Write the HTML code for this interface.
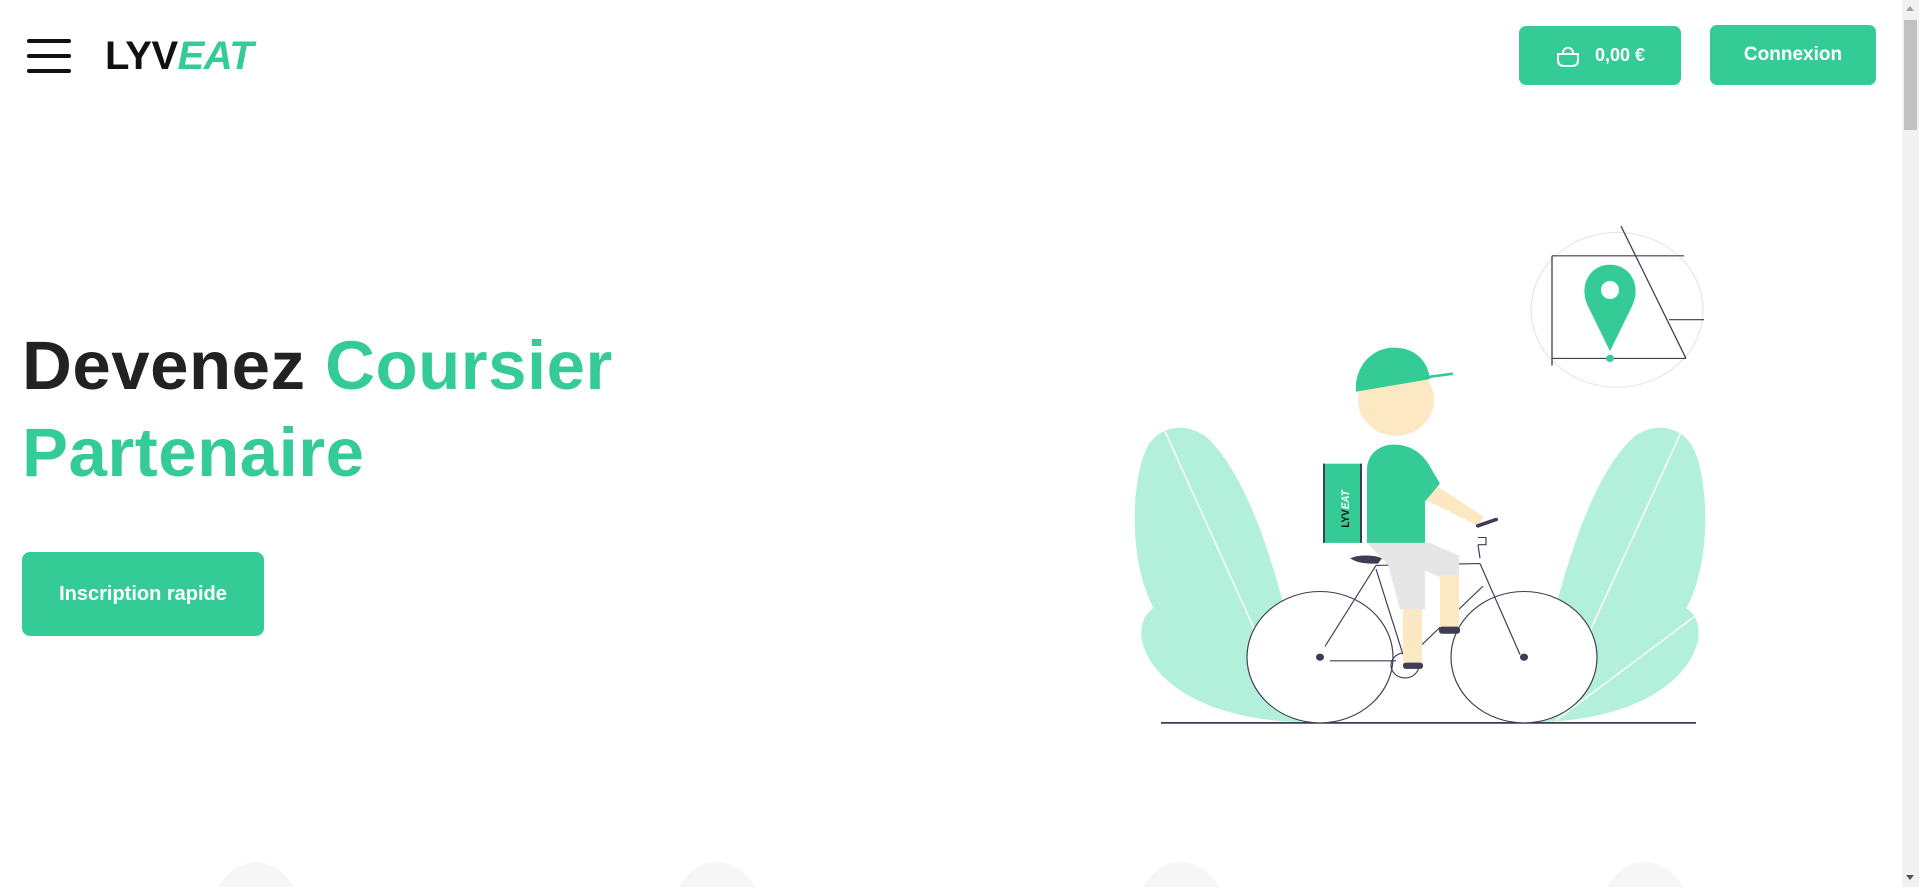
<!DOCTYPE html>
<html><head><meta charset="utf-8"><style>
html,body{margin:0;padding:0;width:1919px;height:887px;overflow:hidden;background:#fff;font-family:"Liberation Sans",sans-serif;}
#wrap{position:relative;width:1919px;height:887px;overflow:hidden}
.abs{position:absolute}
.btn{position:absolute;background:#35cb97;color:#fff;border-radius:7px;font-weight:bold;display:flex;align-items:center;justify-content:center}
.ham{position:absolute;left:27px;width:44px;height:4px;background:#111;border-radius:2px}
</style></head><body><div id="wrap">
<div class="ham" style="top:39px"></div>
<div class="ham" style="top:54px"></div>
<div class="ham" style="top:69px"></div>
<div class="abs" style="left:105px;top:33px;font-size:40px;font-weight:bold;letter-spacing:-0.5px;line-height:46px"><span style="color:#111">LYV</span><span style="color:#35cb97;font-style:italic">EAT</span></div>

<div class="btn" style="left:1519px;top:26px;width:162px;height:59px;font-size:18px">
<svg width="26" height="24" viewBox="0 0 26 24" style="margin-right:14px"><path d="M8 9 C8 2 18 2 18 9" fill="none" stroke="#fff" stroke-width="2"/><path d="M3 10 H23 V16 C23 21 20 22 17 22 H9 C6 22 3 21 3 16 Z" fill="none" stroke="#fff" stroke-width="2"/></svg>0,00 €</div>
<div class="btn" style="left:1710px;top:25px;width:166px;height:60px;font-size:19px">Connexion</div>

<div class="abs" style="left:22px;top:322px;font-size:69px;font-weight:bold;line-height:87px;color:#222;letter-spacing:0.5px">Devenez <span style="color:#35cb97">Coursier</span><br><span style="color:#35cb97">Partenaire</span></div>
<div class="btn" style="left:22px;top:552px;width:242px;height:84px;font-size:20px;border-radius:8px">Inscription rapide</div>

<svg class="abs" style="left:1120px;top:200px" width="620" height="560" viewBox="0 0 620 560">
<g transform="scale(1,0.9)">
<path d="M172,578 C100,560 35,480 22,420 C10,370 14,310 25,280 C35,250 68,245 88,265 C130,310 160,420 178,520 Z" fill="#b3f0dc"/>
<path d="M180,580 C100,578 35,545 22,490 C18,462 32,445 60,450 C105,460 150,520 180,580Z" fill="#b3f0dc"/>
<line x1="45" y1="257" x2="138" y2="486" stroke="#fff" stroke-width="1.5"/>
<path d="M428,578 C500,560 565,480 578,420 C590,370 586,310 575,280 C565,250 532,245 512,265 C470,310 440,420 422,520 Z" fill="#b3f0dc"/>
<path d="M420,580 C500,578 565,545 578,490 C582,462 568,445 540,450 C495,460 450,520 420,580Z" fill="#b3f0dc"/>
<line x1="562" y1="256" x2="467" y2="486" stroke="#fff" stroke-width="1.5"/>
<line x1="584" y1="455" x2="436" y2="578" stroke="#fff" stroke-width="1.5"/>
<ellipse cx="497" cy="122" rx="86" ry="86" fill="none" stroke="#e6e6e6" stroke-width="1.2"/>
<g stroke="#3f3d56" stroke-width="1.3" fill="none">
<line x1="432" y1="62" x2="564" y2="62"/><line x1="432" y1="62" x2="432" y2="184"/><line x1="432" y1="176" x2="566" y2="176"/><line x1="501" y1="29" x2="566" y2="176"/><line x1="549" y1="133" x2="584" y2="133"/></g>
<path d="M490,168 L468,118 C458,95 470,72 490,72 C510,72 522,95 512,118 Z" fill="#35cb97"/>
<ellipse cx="490" cy="100" rx="9" ry="10" fill="#fff"/><circle cx="490" cy="176" r="4" fill="#35cb97"/>
<line x1="41" y1="581" x2="576" y2="581" stroke="#3f3d56" stroke-width="2"/>
<g stroke="#3f3d56" stroke-width="1.2" fill="none">
<ellipse cx="200" cy="508" rx="73" ry="73" fill="#fff"/><ellipse cx="404" cy="508" rx="73" ry="73" fill="#fff"/>
<circle cx="285" cy="517" r="14"/>
<line x1="256" y1="406" x2="360" y2="404"/><line x1="363" y1="429" x2="302" y2="494"/><line x1="256" y1="406" x2="205" y2="496"/><line x1="256" y1="410" x2="283" y2="505"/><line x1="210" y1="512" x2="276" y2="512"/><line x1="360" y1="404" x2="400" y2="505"/><path d="M358,383 L366,383 L366,375 L358,375 M358,383 L360,398"/></g>
<circle cx="200" cy="508" r="4" fill="#3f3d56"/><circle cx="404" cy="508" r="4" fill="#3f3d56"/>
<path d="M230,398 C240,394 252,394 262,398 L258,404 C248,404 238,404 230,398Z" fill="#3f3d56"/>
<path d="M247,381 L310,381 L339,395 L339,420 L322,420 L305,412 L305,455 L280,455 L268,405 Z" fill="#e6e6e6"/>
<rect x="320" y="417" width="19" height="60" fill="#fde8c4"/>
<rect x="283" y="455" width="19" height="62" fill="#fde8c4"/>
<rect x="319" y="474" width="21" height="8" rx="3" fill="#3f3d56"/>
<rect x="283" y="514" width="20" height="7" rx="3" fill="#3f3d56"/>
<path d="M306,310 L364,352 L358,362 L300,330 Z" fill="#fde8c4"/>
<path d="M358,362 L376,355" stroke="#3f3d56" stroke-width="4" stroke-linecap="round"/>
<path d="M247,381 L247,300 C247,280 262,270 278,272 C295,274 305,285 312,300 L320,315 L305,335 L305,381 Z" fill="#35cb97"/>
<rect x="203" y="293" width="39" height="88" fill="#35cb97"/>
<line x1="204" y1="293" x2="204" y2="381" stroke="#3f3d56" stroke-width="2"/>
<line x1="241" y1="293" x2="241" y2="381" stroke="#3f3d56" stroke-width="2"/>
<text transform="translate(229,364) rotate(-90)" font-family="Liberation Sans" font-weight="bold" font-size="11" fill="#111">LYV<tspan font-style="italic" fill="#fff">EAT</tspan></text>
<ellipse cx="276" cy="222" rx="38" ry="40" fill="#fde8c4"/>
<path d="M236,213 C234,185 252,164 274,164 C296,164 308,180 310,199 Z" fill="#35cb97"/>
<line x1="299" y1="198" x2="333" y2="193" stroke="#35cb97" stroke-width="3"/>
</g>
</svg>

<svg class="abs" style="left:0;top:862px" width="1900" height="25" viewBox="0 0 1900 25">
<path d="M217.5,25 A53,80 0 0 1 294.5,25 Z" fill="#f6f6f6"/>
<path d="M678.5,25 A53,80 0 0 1 755.5,25 Z" fill="#f6f6f6"/>
<path d="M1142.5,25 A53,80 0 0 1 1219.5,25 Z" fill="#f6f6f6"/>
<path d="M1606.5,25 A53,80 0 0 1 1683.5,25 Z" fill="#f6f6f6"/>
</svg>

<div class="abs" style="left:1902px;top:0;width:17px;height:887px;background:#f1f1f1"></div>
<div class="abs" style="left:1904px;top:20px;width:13px;height:110px;background:#c1c1c1"></div>
<div class="abs" style="left:1906px;top:6px;width:0;height:0;border-left:4px solid transparent;border-right:4px solid transparent;border-bottom:5px solid #a3a3a3"></div>
<div class="abs" style="left:1906px;top:875px;width:0;height:0;border-left:4px solid transparent;border-right:4px solid transparent;border-top:5px solid #505050"></div>
</div></body></html>
